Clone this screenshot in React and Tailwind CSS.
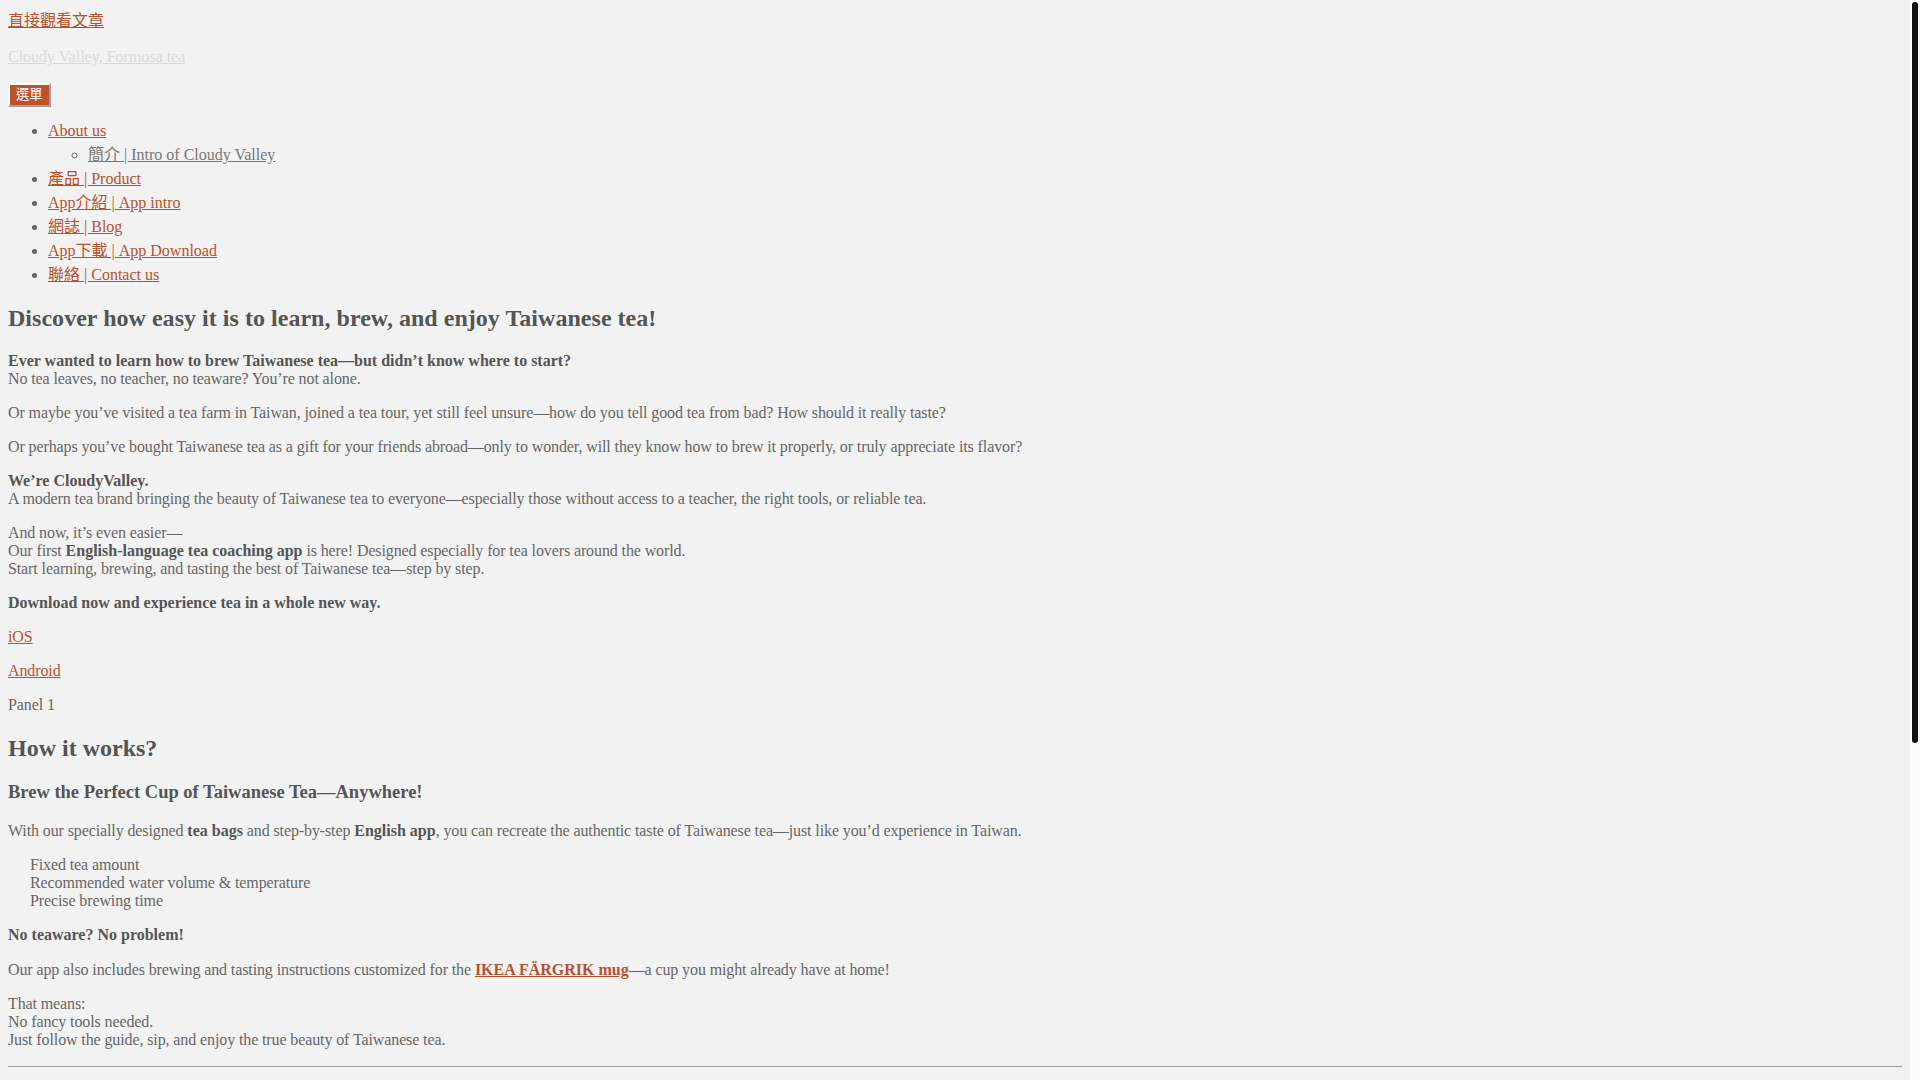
export default function App() {
  const link = "text-[#b9512d] underline";
  const b = "font-bold text-[#555] tracking-normal";
  return (
    <div className="flex h-screen w-full overflow-hidden bg-[#f2f2f2] text-[#666] text-[16px] leading-[18px] [font-family:'Liberation_Serif','Noto_Sans_CJK_TC',serif]">
      <div className="min-w-0 flex-1 px-2 pt-[9px]">
        <header>
          <a href="#content" className={`block w-fit leading-[24px] ${link}`}>直接觀看文章</a>
          <p className="mt-[12px] leading-[24px]">
            <a href="#" className="text-[#dadada] underline">Cloudy Valley, Formosa tea</a>
          </p>
          <nav className="mt-[14px]">
            <button className="h-[24px] px-[6px] bg-[#bf512b] text-white text-[13.33px] leading-[16px] border-2 border-solid border-t-white border-l-white border-r-[#a0a0a0] border-b-[#a0a0a0]">
              選單
            </button>
            <ul className="mt-[12px] pl-[40px] list-disc leading-[24px]">
              <li>
                <a href="#" className={link}>About us</a>
                <ul className="pl-[40px] list-[circle]">
                  <li>
                    <a href="#" className="text-[#777] underline">簡介 | Intro of Cloudy Valley</a>
                  </li>
                </ul>
              </li>
              <li><a href="#" className={link}>產品 | Product</a></li>
              <li><a href="#" className={link}>App介紹 | App intro</a></li>
              <li><a href="#" className={link}>網誌 | Blog</a></li>
              <li><a href="#" className={link}>App下載 | App Download</a></li>
              <li><a href="#" className={link}>聯絡 | Contact us</a></li>
            </ul>
          </nav>
        </header>

        <main id="content" className="tracking-[-0.11px]">
          <h2 className="mt-[17px] text-[24px] leading-[28px] font-bold text-[#555] tracking-[0.03px]">
            Discover how easy it is to learn, brew, and enjoy Taiwanese tea!
          </h2>
          <p className="mt-[20px]">
            <strong className={b}>Ever wanted to learn how to brew Taiwanese tea—but didn’t know where to start?</strong>
            <br />
            No tea leaves, no teacher, no teaware? You’re not alone.
          </p>
          <p className="mt-4">
            Or maybe you’ve visited a tea farm in Taiwan, joined a tea tour, yet still feel unsure—how do you tell good tea from bad? How should it really taste?
          </p>
          <p className="mt-4">
            Or perhaps you’ve bought Taiwanese tea as a gift for your friends abroad—only to wonder, will they know how to brew it properly, or truly appreciate its flavor?
          </p>
          <p className="mt-4">
            <strong className={b}>We’re CloudyValley.</strong>
            <br />
            A modern tea brand bringing the beauty of Taiwanese tea to everyone—especially those without access to a teacher, the right tools, or reliable tea.
          </p>
          <p className="mt-4">
            And now, it’s even easier—
            <br />
            Our first <strong className={b}>English-language tea coaching app</strong> is here! Designed especially for tea lovers around the world.
            <br />
            Start learning, brewing, and tasting the best of Taiwanese tea—step by step.
          </p>
          <p className="mt-4">
            <strong className={b}>Download now and experience tea in a whole new way.</strong>
          </p>
          <p className="mt-4"><a href="#" className={link}>iOS</a></p>
          <p className="mt-4"><a href="#" className={link}>Android</a></p>
          <p className="mt-4">Panel 1</p>

          <h2 className="mt-[20px] text-[24px] leading-[28px] font-bold text-[#555] tracking-normal">How it works?</h2>
          <h3 className="mt-[19px] text-[18.5px] leading-[22px] font-bold text-[#555] tracking-normal">
            Brew the Perfect Cup of Taiwanese Tea—Anywhere!
          </h3>
          <p className="mt-[19px]">
            With our specially designed <strong className={b}>tea bags</strong> and step-by-step <strong className={b}>English app</strong>, you can recreate the authentic taste of Taiwanese tea—just like you’d experience in Taiwan.
          </p>
          <ul className="mt-4 pl-[22px] list-none">
            <li>Fixed tea amount</li>
            <li>Recommended water volume &amp; temperature</li>
            <li>Precise brewing time</li>
          </ul>
          <p className="mt-4">
            <strong className={b}>No teaware? No problem!</strong>
          </p>
          <p className="mt-[17px]">
            Our app also includes brewing and tasting instructions customized for the{" "}
            <a href="#" className="font-bold text-[#b9512d] underline tracking-normal">IKEA FÄRGRIK mug</a>—a cup you might already have at home!
          </p>
          <p className="mt-4">
            That means:
            <br />
            No fancy tools needed.
            <br />
            Just follow the guide, sip, and enjoy the true beauty of Taiwanese tea.
          </p>
          <hr className="mt-[17px] border-0 border-t border-solid border-[#999]" />
        </main>
      </div>
      <div className="w-[10px] shrink-0 bg-[#fafafa] px-[2px] pt-[2px]">
        <div className="h-[741px] rounded-[3px] bg-[#111]" />
      </div>
    </div>
  );
}
